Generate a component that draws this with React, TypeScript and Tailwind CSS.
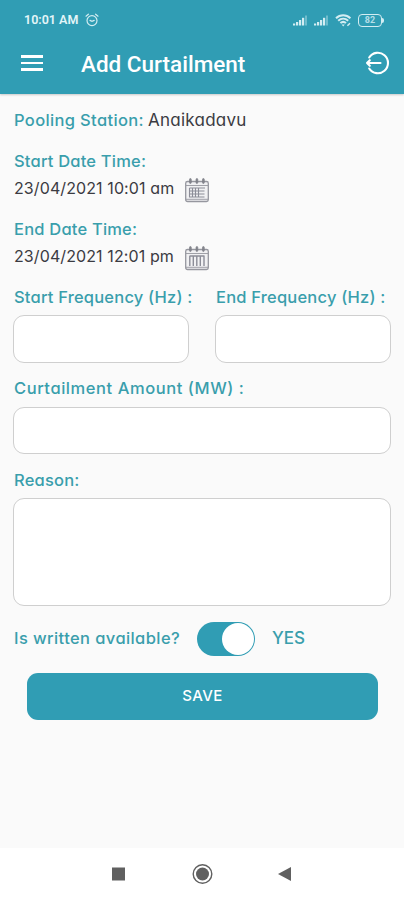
import { useState } from "react";
import type { ReactNode } from "react";

function AlarmIcon() {
  return (
    <svg className="h-[14px] w-[14px]" viewBox="0 0 14 14" fill="none" stroke="#d3edf2" strokeWidth="1.2" strokeLinecap="round">
      <circle cx="7" cy="7.6" r="5" />
      <path d="M1 3.2 3.4 1.2M13 3.2 10.6 1.2M5 7.4l2 1 2.2-1" />
    </svg>
  );
}

function SignalIcon() {
  return (
    <svg className="h-[11px] w-[15px]" viewBox="0 0 15 11" fill="#d3edf2">
      <rect x="0" y="8.5" width="2.2" height="2" />
      <rect x="3" y="7" width="2.2" height="3.5" />
      <rect x="6" y="5" width="2.2" height="5.5" />
      <rect x="9" y="2.8" width="2.2" height="7.7" />
      <rect x="12" y="0.5" width="2" height="10" opacity="0.4" />
    </svg>
  );
}

function WifiIcon() {
  return (
    <svg className="h-[13px] w-[17px]" viewBox="0 0 17 13" fill="none" stroke="#d3edf2" strokeWidth="2">
      <path d="M1 4.2C5.2 0.2 11.2 0.2 15.4 4.2M3.2 6.7c3-2.7 7-2.7 10 0M5.4 9.1c1.7-1.5 3.9-1.5 5.6 0" />
      <path d="M6.6 10.4 8.2 12.4l1.6-2z" fill="#d3edf2" stroke="none" />
      <path d="M12.4 11.8 15 9.2" strokeWidth="1.5" />
    </svg>
  );
}

function Battery() {
  return (
    <div className="flex items-center">
      <div className="flex h-[13px] w-[24px] items-center justify-center rounded-[4px] border-[1.5px] border-[#d3edf2] text-[9px] leading-none font-bold text-[#b5dfe8]">
        82
      </div>
      <div className="h-[5px] w-[2px] rounded-r-sm bg-[#d3edf2]" />
    </div>
  );
}

function LogoutIcon() {
  return (
    <svg className="h-[26px] w-[26px]" viewBox="0 0 26 26" fill="none" stroke="#fff" strokeWidth="2.1" strokeLinecap="round" strokeLinejoin="round">
      <path d="M5.2 7.5A10.2 10.2 0 1 1 5.2 18.5" />
      <path d="M16.5 13H3M5.8 10.2 3 13l2.8 2.8" />
    </svg>
  );
}

function CalendarIcon({ lines }: { lines: boolean }) {
  return (
    <svg className="h-[26px] w-[26px]" viewBox="0 0 26 26" fill="none" stroke="#96979f" strokeWidth="1.3">
      <rect x="1.7" y="4.5" width="22.6" height="20" rx="1.8" fill="#f1f1f3" />
      <path d="M2 8.5h22M2 22.3h22" strokeWidth="0.9" />
      <g fill="#85868e" stroke="#777881" strokeWidth="0.6">
        <rect x="5.5" y="1.5" width="1.8" height="5" rx="0.9" />
        <rect x="12" y="1.5" width="1.8" height="5" rx="0.9" />
        <rect x="18.5" y="1.5" width="1.8" height="5" rx="0.9" />
      </g>
      {lines ? (
        <path d="M5.5 11h15.5M5.5 11v9h15M8.5 11v9M11.5 11v9M14.5 11v9M5.5 14h15M5.5 17h15" stroke="#8c8d98" strokeWidth="1.1" />
      ) : (
        <path d="M5.5 11h15M5.8 11v10M9.3 11v10M12.8 11v10M16.3 11v10M20 11v10" stroke="#8c8d98" strokeWidth="1.4" />
      )}
    </svg>
  );
}

function Label({ children, className = "tracking-[0.2px]" }: { children: ReactNode; className?: string }) {
  return (
    <span className={`block h-6 pl-px text-[16.5px] leading-6 font-medium whitespace-nowrap text-[#399eac] ${className}`}>
      {children}
    </span>
  );
}

function DateRow({ value, lines }: { value: string; lines: boolean }) {
  return (
    <div className="mt-[3px] flex h-6 items-center pl-px">
      <span className="w-[170px] text-[16px] leading-6 tracking-[0.1px] whitespace-nowrap text-[#3b3b42]">{value}</span>
      <button type="button" className="mt-[3px]">
        <CalendarIcon lines={lines} />
      </button>
    </div>
  );
}

const field = "block w-full rounded-[11px] border border-[#cfcfcf] bg-white px-3 outline-none";

export default function App() {
  const [written, setWritten] = useState(true);

  return (
    <div className="flex h-[900px] w-[404px] flex-col overflow-hidden bg-[#fafafa] font-['Inter','Liberation_Sans',sans-serif] [font-feature-settings:'cv11']">
      <header className="h-[94px] shrink-0 bg-[#309db4] font-['Roboto',sans-serif] shadow-[0_1px_2px_rgba(0,0,0,0.2)]">
        <div className="flex h-10 items-center pr-[20px] pl-[24px]">
          <span className="w-[61px] text-[12.5px] font-semibold whitespace-nowrap text-[#e3f5f8]">10:01 AM</span>
          <AlarmIcon />
          <div className="ml-auto flex items-center gap-[6px]">
            <SignalIcon />
            <SignalIcon />
            <WifiIcon />
            <Battery />
          </div>
        </div>
        <div className="flex h-[46px] items-center pr-[14px] pl-[21px]">
          <button type="button" className="flex w-[22px] flex-col gap-[4px]">
            <span className="h-[2.5px] bg-white" />
            <span className="h-[2.5px] bg-white" />
            <span className="h-[2.5px] bg-white" />
          </button>
          <h1 className="ml-[38px] pt-[2px] text-[22.5px] leading-7 font-medium text-white">Add Curtailment</h1>
          <button type="button" className="ml-auto">
            <LogoutIcon />
          </button>
        </div>
      </header>

      <main className="flex-1 px-[13px] pt-[14px]">
        <div className="flex gap-1">
          <Label className="w-[131px] tracking-[0.35px]">Pooling Station:</Label>
          <span className="text-[17px] leading-6 tracking-[0.25px] text-[#3b3b42]">Anaikadavu</span>
        </div>

        <div className="mt-[17px]">
          <Label>Start Date Time:</Label>
          <DateRow value="23/04/2021 10:01 am" lines />
        </div>

        <div className="mt-[17px]">
          <Label>End Date Time:</Label>
          <DateRow value="23/04/2021 12:01 pm" lines={false} />
        </div>

        <div className="mt-[17px] grid grid-cols-2 gap-[26px]">
          <label>
            <Label>Start Frequency (Hz) :</Label>
            <input className={`mt-[6px] h-[48px] ${field}`} />
          </label>
          <label>
            <Label>End Frequency (Hz) :</Label>
            <input className={`mt-[6px] h-[48px] ${field}`} />
          </label>
        </div>

        <label className="mt-[13px] block">
          <Label className="tracking-[0.56px]">Curtailment Amount (MW) :</Label>
          <input className={`mt-[7px] h-[47px] ${field}`} />
        </label>

        <label className="mt-[14px] block">
          <Label>Reason:</Label>
          <textarea className={`mt-[6px] h-[108px] resize-none ${field}`} />
        </label>

        <div className="mt-[16px] flex h-[34px] items-center">
          <Label className="-mt-[2px] w-[184px] tracking-[0.4px]">Is written available?</Label>
          <button
            type="button"
            role="switch"
            aria-checked={written}
            aria-label="Is written available?"
            onClick={() => setWritten(!written)}
            className={`flex h-[34px] w-[58px] items-center rounded-full p-px ${
              written ? "justify-end bg-[#309db4]" : "justify-start bg-gray-400"
            }`}
          >
            <span className="h-[32px] w-[32px] rounded-full bg-white" />
          </button>
          <span className="ml-[17px] text-[17px] font-medium text-[#399eac]">{written ? "YES" : "NO"}</span>
        </div>

        <button
          type="button"
          className="mt-[17px] ml-[14px] block h-[47px] w-[351px] rounded-[11px] bg-[#309db4] text-[15px] font-medium tracking-[0.4px] text-white"
        >
          SAVE
        </button>
      </main>

      <nav className="flex h-[52px] shrink-0 items-center bg-white pl-[111px]">
        <svg className="h-[26px] w-[184px]" viewBox="0 0 184 26" fill="#606060">
          <rect x="1" y="6.5" width="13" height="13" />
          <circle cx="91.5" cy="13" r="6.5" />
          <circle cx="91.5" cy="13" r="9.3" fill="none" stroke="#606060" strokeWidth="1.4" />
          <path d="M180 6v14l-13-7z" />
        </svg>
      </nav>
    </div>
  );
}
